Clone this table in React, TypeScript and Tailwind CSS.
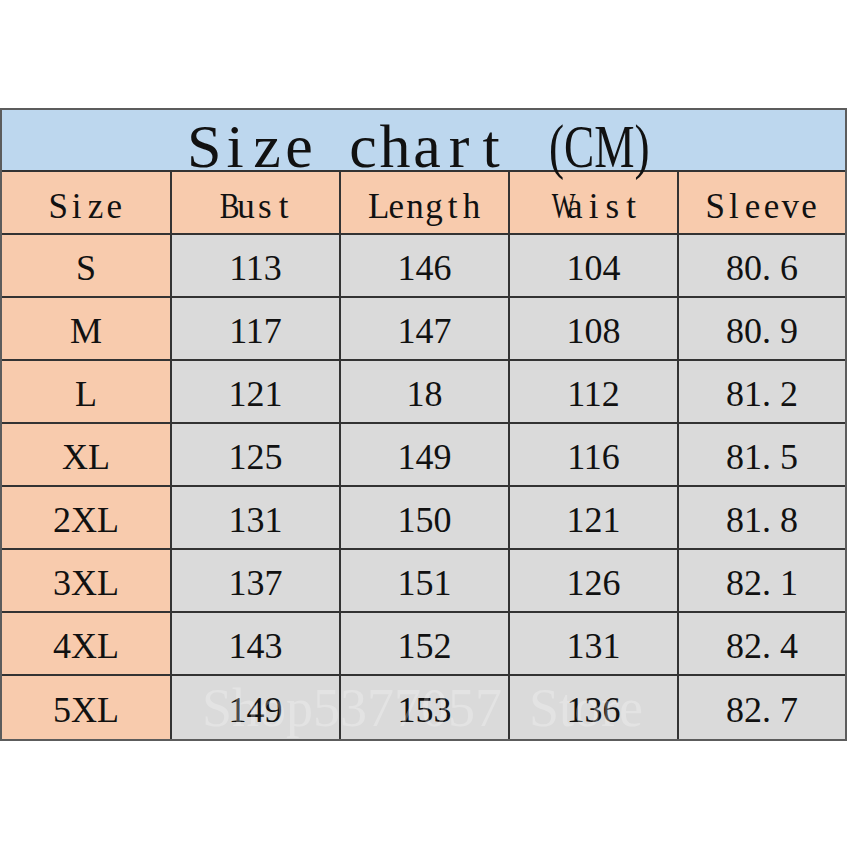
import React from "react";

const rows: [string, string, string, string, string][] = [
  ["S", "113", "146", "104", "80.6"],
  ["M", "117", "147", "108", "80.9"],
  ["L", "121", "18", "112", "81.2"],
  ["XL", "125", "149", "116", "81.5"],
  ["2XL", "131", "150", "121", "81.8"],
  ["3XL", "137", "151", "126", "82.1"],
  ["4XL", "143", "152", "131", "82.4"],
  ["5XL", "149", "153", "136", "82.7"],
];

const headers = ["Size", "Bust", "Length", "Waist", "Sleeve"];
const widths = ["w-[170px]", "w-[169px]", "w-[169px]", "w-[169px]", "flex-1"];

function charScale(c: string) {
  if (c === "W") return "scale-x-[0.72]";
  if (c === "B") return "scale-x-[0.85]";
  return "";
}

function Mono({ text, cls }: { text: string; cls: string }) {
  return (
    <span className="inline-flex">
      {text.split("").map((c, i) => (
        <span key={i} className={`inline-block text-center ${cls}`}>
          <span className={`inline-block ${charScale(c)}`}>{c === " " ? "\u00a0" : c}</span>
        </span>
      ))}
    </span>
  );
}

function Value({ v }: { v: string }) {
  if (v.includes(".")) {
    const [a, b] = v.split(".");
    return (
      <span className="inline-flex items-baseline">
        <span>{a}.</span>
        <span className="inline-block w-[9px]" />
        <span>{b}</span>
      </span>
    );
  }
  return <span>{v}</span>;
}

export default function App() {
  return (
    <div className="font-['Liberation_Serif'] w-[850px] h-[850px] bg-white text-[#111]">
      <div className="h-[108px]" />
      <div className="w-[847px] border-2 border-[#5c5c5c] flex flex-col">
        {/* Title */}
        <div className="h-[62px] bg-[#bdd7ee] border-b-2 border-[#333]">
          <div className="flex items-baseline pl-[185px] pt-[5px] leading-none text-[62px]">
            <Mono text="Size chart " cls="w-[32px]" />
            <span className="inline-block ml-[10px] origin-left scale-x-[0.73] leading-none">(CM)</span>
          </div>
        </div>
        {/* Header */}
        <div className="h-[63px] flex bg-[#f8cbad] border-b-2 border-[#333]">
          {headers.map((h, i) => (
            <div
              key={h}
              className={`${widths[i]} h-full flex items-center justify-center pt-[8px] text-[35px] leading-none ${
                i < 4 ? "border-r-2 border-[#333]" : ""
              }`}
            >
              <Mono text={h} cls="w-[18.8px]" />
            </div>
          ))}
        </div>
        {rows.map((r, ri) => (
          <div
            key={r[0]}
            className={`relative h-[63px] flex ${
              ri < rows.length - 1 ? "border-b-2 border-[#333]" : ""
            }`}
          >
            {r.map((v, i) => (
              <div
                key={i}
                className={`${widths[i]} h-full flex items-center justify-center pt-[5px] text-[36px] leading-none ${
                  i === 0 ? "bg-[#f8cbad]" : "bg-[#dadada]"
                } ${i < 4 ? "border-r-2 border-[#333]" : ""}`}
              >
                <Value v={v} />
              </div>
            ))}
            {ri === rows.length - 1 && (
              <div className="absolute left-[200px] top-[5px] text-[54px] leading-none text-white/25 whitespace-pre pointer-events-none">
                Shop5377057  Store
              </div>
            )}
          </div>
        ))}
      </div>
    </div>
  );
}
